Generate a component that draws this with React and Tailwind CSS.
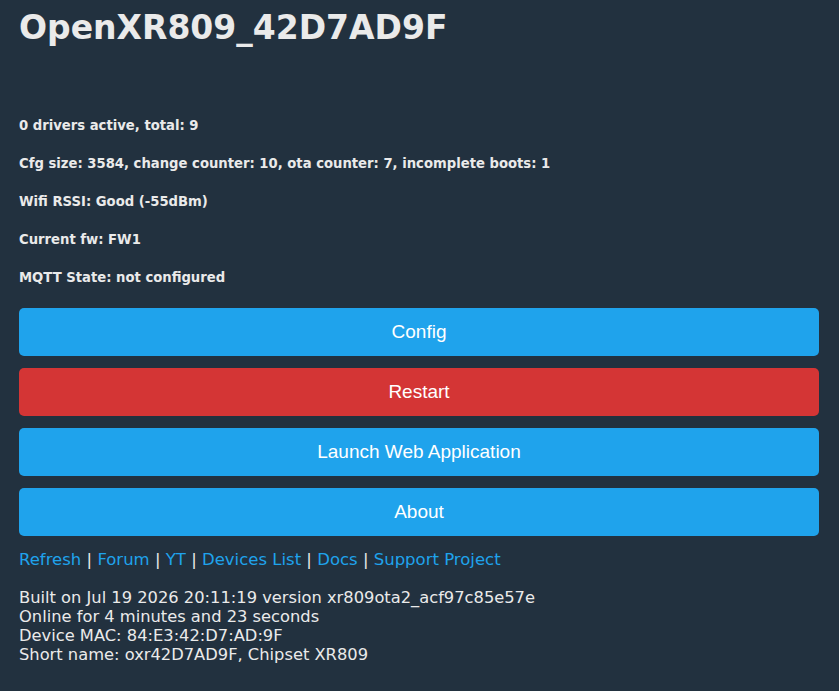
import React from 'react';

// Status lines shown under the device name
const statusLines = [
    '0 drivers active, total: 9',
    'Cfg size: 3584, change counter: 10, ota counter: 7, incomplete boots: 1',
    'Wifi RSSI: Good (-55dBm)',
    'Current fw: FW1',
    'MQTT State: not configured',
];

const buttons = [
    { label: 'Config', danger: false },
    { label: 'Restart', danger: true },
    { label: 'Launch Web Application', danger: false },
    { label: 'About', danger: false },
];

const links = ['Refresh', 'Forum', 'YT', 'Devices List', 'Docs', 'Support Project'];

const infoLines = [
    'Built on Jul 19 2026 20:11:19 version xr809ota2_acf97c85e57e',
    'Online for 4 minutes and 23 seconds',
    'Device MAC: 84:E3:42:D7:AD:9F',
    'Short name: oxr42D7AD9F, Chipset XR809',
];

export default function App() {
    return (
        <div className="min-h-screen bg-[#22313f] text-[#eaeaea] pl-[19px] pr-[20px] pt-[8px] pb-6" style={{ fontFamily: '"DejaVu Sans", Verdana, sans-serif' }}>
            <h1 className="text-[33px] font-bold leading-[40px] mb-[70px]">OpenXR809_42D7AD9F</h1>

            <div className="flex flex-col gap-[22px] text-[13.2px] font-bold leading-[16px]">
                {statusLines.map((line) => (
                    <div key={line}>{line}</div>
                ))}
            </div>

            <div className="flex flex-col gap-[12px] mt-[22px]">
                {buttons.map((b) => (
                    <button
                        key={b.label}
                        type="button"
                        className={`h-[48px] w-full rounded-[5px] text-white text-[19px] ${b.danger ? 'bg-[#d43535]' : 'bg-[#1fa3ec]'}`}
                        style={{ fontFamily: '"Liberation Sans", Arial, sans-serif' }}
                    >
                        {b.label}
                    </button>
                ))}
            </div>

            <div className="mt-[12px] text-[16.5px] leading-[24px]">
                {links.map((l, i) => (
                    <span key={l}>
                        {i > 0 && <span> | </span>}
                        <a href="#" className="text-[#1fa3ec]">{l}</a>
                    </span>
                ))}
            </div>

            <div className="mt-[16px] text-[16.3px] leading-[19px]">
                {infoLines.map((l) => (
                    <div key={l}>{l}</div>
                ))}
            </div>
        </div>
    );
}
